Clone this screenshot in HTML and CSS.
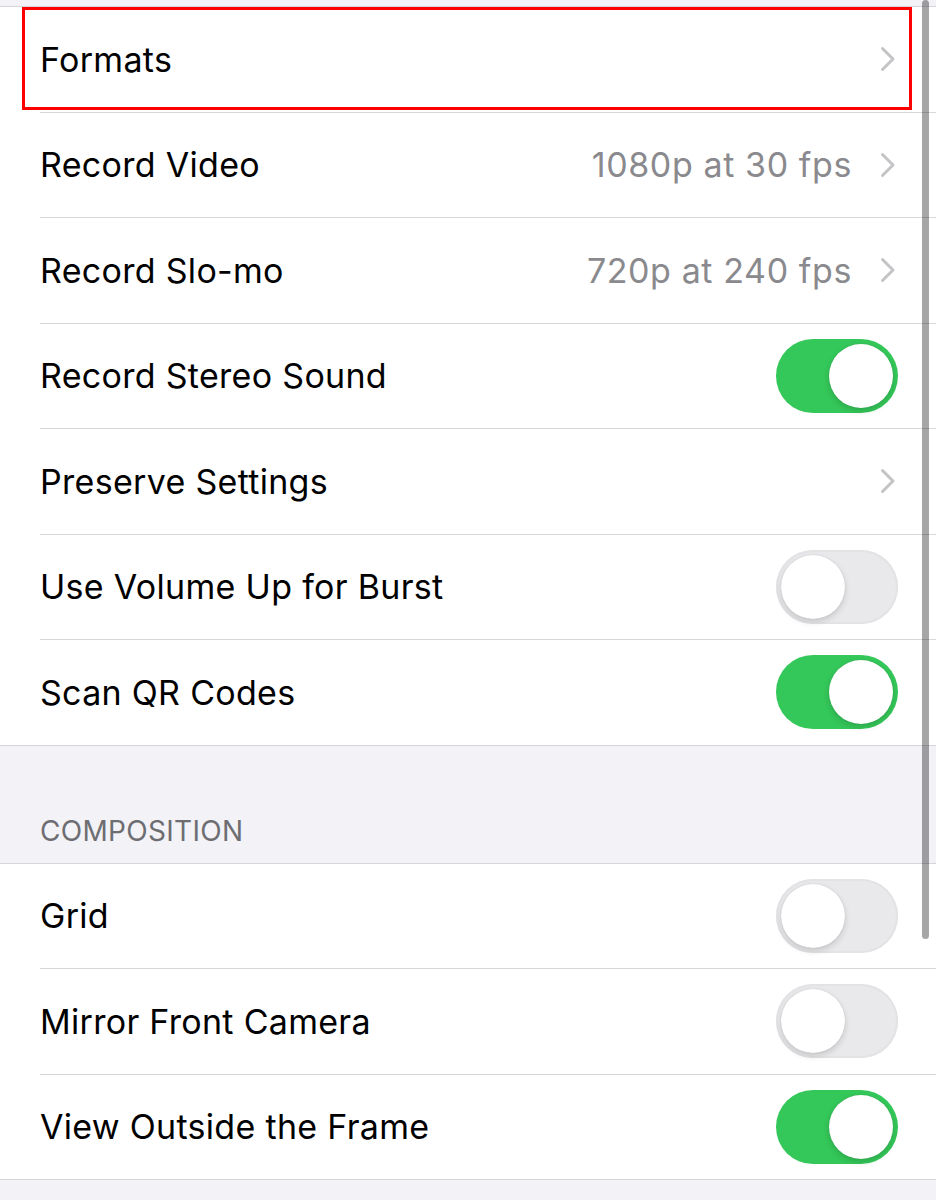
FILE: index.html
```html
<!DOCTYPE html>
<html lang="en">
<head>
    <meta charset="UTF-8">
    <meta name="viewport" content="width=device-width, initial-scale=1.0">
    <title>Camera Settings</title>
    <link rel="stylesheet" href="styles.css">
</head>
<body>

    <div class="page">
        <ul class="group">
            <li class="row">
                <span class="label">Formats</span>
                <span class="chevron"><svg width="16" height="26" viewBox="0 0 16 26"><path d="M2.5 2.5 L13 13 L2.5 23.5" fill="none" stroke="#c4c4c7" stroke-width="3" stroke-linecap="round" stroke-linejoin="round"/></svg></span>
            </li>
            <li class="row">
                <span class="label">Record Video</span>
                <span class="value">1080p at 30 fps</span>
                <span class="chevron"><svg width="16" height="26" viewBox="0 0 16 26"><path d="M2.5 2.5 L13 13 L2.5 23.5" fill="none" stroke="#c4c4c7" stroke-width="3" stroke-linecap="round" stroke-linejoin="round"/></svg></span>
            </li>
            <li class="row">
                <span class="label">Record Slo-mo</span>
                <span class="value">720p at 240 fps</span>
                <span class="chevron"><svg width="16" height="26" viewBox="0 0 16 26"><path d="M2.5 2.5 L13 13 L2.5 23.5" fill="none" stroke="#c4c4c7" stroke-width="3" stroke-linecap="round" stroke-linejoin="round"/></svg></span>
            </li>
            <li class="row">
                <span class="label">Record Stereo Sound</span>
                <span class="switch on"><span class="knob"></span></span>
            </li>
            <li class="row">
                <span class="label">Preserve Settings</span>
                <span class="chevron"><svg width="16" height="26" viewBox="0 0 16 26"><path d="M2.5 2.5 L13 13 L2.5 23.5" fill="none" stroke="#c4c4c7" stroke-width="3" stroke-linecap="round" stroke-linejoin="round"/></svg></span>
            </li>
            <li class="row">
                <span class="label">Use Volume Up for Burst</span>
                <span class="switch"><span class="knob"></span></span>
            </li>
            <li class="row">
                <span class="label">Scan QR Codes</span>
                <span class="switch on"><span class="knob"></span></span>
            </li>
        </ul>

        <div class="section-header">COMPOSITION</div>

        <ul class="group">
            <li class="row">
                <span class="label">Grid</span>
                <span class="switch"><span class="knob"></span></span>
            </li>
            <li class="row">
                <span class="label">Mirror Front Camera</span>
                <span class="switch"><span class="knob"></span></span>
            </li>
            <li class="row">
                <span class="label">View Outside the Frame</span>
                <span class="switch on"><span class="knob"></span></span>
            </li>
        </ul>

        <!-- annotation box and scroll indicator sit over the list -->
        <div class="highlight"></div>
        <div class="scrollbar"></div>
    </div>

</body>
</html>
```

FILE: styles.css
```css
body {
    margin: 0;
    font-family: 'Inter', 'Roboto', sans-serif;
    background-color: #f2f2f7;
    color: #000;
}

.page {
    position: relative;
    width: 936px;
    height: 1200px;
    overflow: hidden;
    padding-top: 6px;
    box-sizing: border-box;
}

.group {
    list-style: none;
    margin: 0;
    padding: 0;
    background-color: #fff;
    border-top: 1px solid #d6d6da;
    border-bottom: 1px solid #d6d6da;
}

.row {
    display: flex;
    align-items: center;
    height: 105.5px;
    margin-left: 40px;
    padding-right: 38px;
    border-bottom: 1px solid #d8d8dc;
    box-sizing: border-box;
}

.row:last-child {
    border-bottom: none;
    height: 104.5px;
}

.label {
    flex: 1;
    font-size: 34px;
    letter-spacing: 0.3px;
}

.value {
    font-size: 34px;
    color: #8a8a8e;
    letter-spacing: 0.6px;
    margin-right: 28px;
}

.chevron {
    display: flex;
    align-items: center;
    margin-right: 2px;
}

.switch {
    position: relative;
    width: 122px;
    height: 74px;
    border-radius: 37px;
    background-color: #e9e9eb;
    box-shadow: inset 0 0 0 2px #e3e3e6;
    box-sizing: border-box;
}

.switch.on {
    background-color: #34c759;
    box-shadow: none;
}

.knob {
    position: absolute;
    top: 5px;
    left: 5px;
    width: 64px;
    height: 64px;
    border-radius: 50%;
    background-color: #fff;
    box-shadow: 0 3px 6px rgba(0, 0, 0, 0.15), 0 0 1px rgba(0, 0, 0, 0.2);
}

.switch.on .knob {
    left: 53px;
}

.section-header {
    height: 117px;
    box-sizing: border-box;
    padding: 0 40px 15px;
    display: flex;
    align-items: flex-end;
    font-size: 28px;
    color: #6d6d72;
    letter-spacing: 0.3px;
}

.highlight {
    position: absolute;
    left: 22px;
    top: 7px;
    width: 890px;
    height: 103px;
    border: 3px solid #f00;
    box-sizing: border-box;
}

.scrollbar {
    position: absolute;
    left: 922px;
    top: 0;
    width: 7px;
    height: 939px;
    border-radius: 3.5px;
    background-color: rgba(0, 0, 0, 0.35);
}
```
